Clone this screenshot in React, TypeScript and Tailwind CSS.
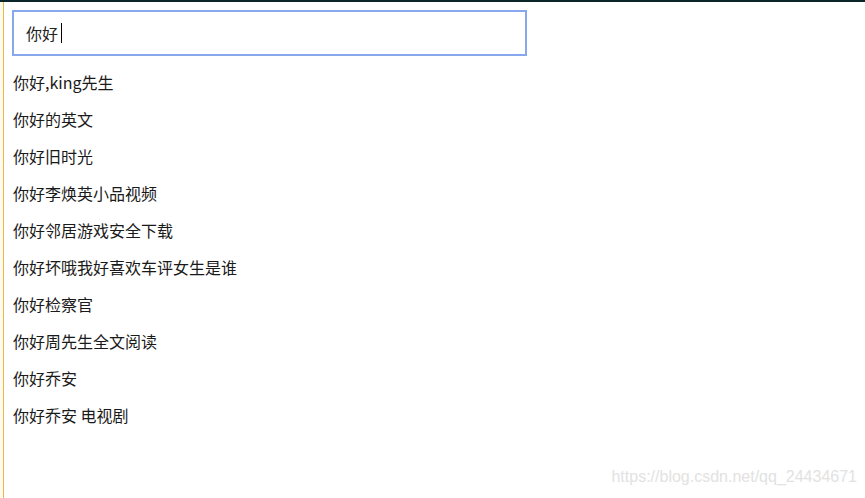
const items = [
  "你好,king先生",
  "你好的英文",
  "你好旧时光",
  "你好李焕英小品视频",
  "你好邻居游戏安全下载",
  "你好坏哦我好喜欢车评女生是谁",
  "你好检察官",
  "你好周先生全文阅读",
  "你好乔安",
  "你好乔安 电视剧",
];

const App = () => {
  return (
    <div
      className="relative w-[865px] h-[498px] overflow-hidden bg-white"
      style={{ fontFamily: '"Microsoft YaHei", "Noto Sans CJK SC", sans-serif' }}
    >
      <div className="h-[2px] bg-[#0b2628]" />
      <div className="flex h-[496px]">
        <div className="w-[3px] bg-[#fffaf0]" />
        <div className="w-[1px] bg-[#f0b840]" />
        <div className="flex-1 pl-[8px] pt-[8px]">
          <div className="flex items-center w-[515px] h-[46px] border-2 border-[#88a8ee] bg-white pl-[12px] text-[16px] text-[#222]">
            <span>你好</span>
            <span className="ml-[3px] inline-block w-[1px] h-[20px] bg-black" />
          </div>
          <ul className="mt-[7px]">
            {items.map((t) => (
              <li
                key={t}
                className="h-[37px] flex items-center pl-[1px] text-[16px] text-[#1a1a1a] whitespace-pre"
              >
                {t}
              </li>
            ))}
          </ul>
        </div>
      </div>
      {/* csdn watermark */}
      <div
        className="absolute right-[8px] bottom-[9px] text-[16px] text-[#e2e2e2]"
        style={{ fontFamily: '"Liberation Sans", Arial, sans-serif' }}
      >
        https://blog.csdn.net/qq_24434671
      </div>
    </div>
  );
};

export default App;
